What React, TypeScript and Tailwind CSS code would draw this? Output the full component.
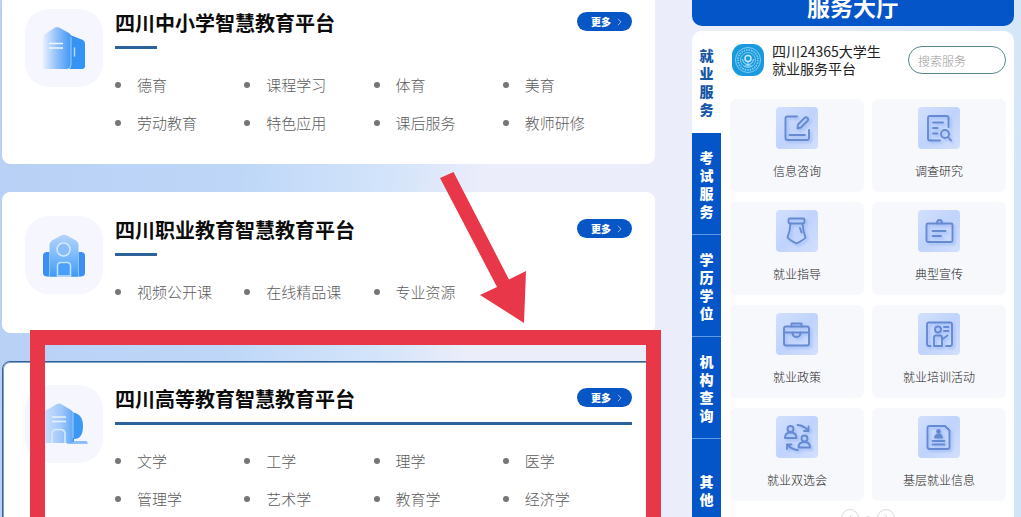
import type { ReactNode } from "react";

type Platform = {
  title: string;
  items: string[];
  icon: ReactNode;
  card: string;
  rule: string;
  overlay?: ReactNode;
};

function SchoolIcon() {
  return (
    <svg viewBox="0 0 78 78" className="size-full" aria-hidden="true">
      <defs>
        <linearGradient id="school-a" x1="0" x2="1" y1="0" y2="0">
          <stop offset="0" stopColor="#e9f0fe" />
          <stop offset="0.500" stopColor="#8fbefa" />
          <stop offset="1" stopColor="#4199f8" />
        </linearGradient>
      </defs>
      <path d="M45 26 L58 31 Q60 32 60 35 V57 Q60 60 57 60 H44 Z" fill="#3593f5" />
      <path d="M18 29 Q18 26 20 25 L30 18.500 Q32 17.500 34 18.500 L44 24 Q46 25 46 28 V60 H18 Z" fill="url(#school-a)" />
      <path d="M46 28 V56 Q46 60 42 60" fill="none" stroke="#9fd0ff" strokeWidth="1" />
      <path d="M24 34.500 H38 M24 39 H38" stroke="#eef6ff" strokeWidth="1.500" />
      <path d="M49.500 39 V47" stroke="#b5dcff" strokeWidth="1.500" strokeLinecap="round" />
    </svg>
  );
}

function HallIcon() {
  return (
    <svg viewBox="0 0 78 78" className="size-full" aria-hidden="true">
      <defs>
        <linearGradient id="hall-a" x1="0" x2="0" y1="0" y2="1">
          <stop offset="0" stopColor="#b4d3fb" />
          <stop offset="0.500" stopColor="#7cbaf9" />
          <stop offset="1" stopColor="#3f9af7" />
        </linearGradient>
      </defs>
      <rect x="18" y="36" width="42" height="24.500" rx="4" fill="#3c8ff0" />
      <path d="M24.500 60.500 V29 Q24.500 26 27 24.500 L36 19.500 Q39 18 42 19.500 L51 24.500 Q53.500 26 53.500 29 V60.500 Z" fill="url(#hall-a)" />
      <path d="M24.500 36 V60 M53.500 36 V60" stroke="#8ac4fc" strokeWidth="1" />
      <circle cx="38.500" cy="33.500" r="6.500" fill="#8abcf7" stroke="#d3e8ff" strokeWidth="1.500" />
      <path d="M32.500 60 V50 Q32.500 46.500 36 46.500 H42 Q45.500 46.500 45.500 50 V60 Z" fill="#4c9ff7" stroke="#c4e2ff" strokeWidth="1.500" />
    </svg>
  );
}

function CollegeIcon() {
  return (
    <svg viewBox="0 0 78 78" className="size-full" aria-hidden="true">
      <defs>
        <linearGradient id="college-a" x1="0" x2="1" y1="0" y2="0">
          <stop offset="0" stopColor="#cfe0fc" />
          <stop offset="0.600" stopColor="#a0c8fb" />
          <stop offset="1" stopColor="#60a8f8" />
        </linearGradient>
      </defs>
      <path d="M44 27 Q58 27 58 41 Q58 54 49 54 V56 H61 Q62.500 57 62.500 58.500 H42 Z" fill="#3d97f5" />
      <path d="M50 56 H61 Q62.500 57 62.500 58.500 H42 Z" fill="#8cbdf9" />
      <path d="M18 29 Q18 27 20 26 L32 19 Q34 18 36 19 L46 25 Q48 26 48 29 V58 H18 Z" fill="url(#college-a)" />
      <path d="M48 27.500 V53" stroke="#9dcdff" strokeWidth="1" />
      <path d="M27 32 H41 M27 36.500 H41" stroke="#e6f1ff" strokeWidth="1.500" />
      <path d="M27 58 V49 Q27 44.500 32 44.500 H35 Q40 44.500 40 49 V58" fill="none" stroke="#d9eaff" strokeWidth="1.500" />
    </svg>
  );
}

function PointerArrow() {
  return (
    <svg
      viewBox="0 0 86 151"
      className="pointer-events-none absolute -top-[21px] right-[128px] z-20 h-[151px] w-[86px]"
      aria-hidden="true"
    >
      <path d="M0 6 L13.500 0 L69 107.500 L86 99 L84 151 L40 123 L57 115 Z" fill="#e83748" />
    </svg>
  );
}

const platforms: Platform[] = [
  {
    title: "四川中小学智慧教育平台",
    items: ["德育", "课程学习", "体育", "美育", "劳动教育", "特色应用", "课后服务", "教师研修"],
    icon: <SchoolIcon />,
    card: "rounded-b-lg border-white pt-2",
    rule: "w-[42px]",
  },
  {
    title: "四川职业教育智慧教育平台",
    items: ["视频公开课", "在线精品课", "专业资源"],
    icon: <HallIcon />,
    card: "rounded-lg border-white pt-[23px]",
    rule: "w-[42px]",
    overlay: <PointerArrow />,
  },
  {
    title: "四川高等教育智慧教育平台",
    items: ["文学", "工学", "理学", "医学", "管理学", "艺术学", "教育学", "经济学"],
    icon: <CollegeIcon />,
    card: "rounded-lg border-[#2f6299] pt-[23px] ring-1 ring-inset ring-[#2f6299]/60",
    rule: "w-full",
    overlay: (
      <div className="pointer-events-none absolute -top-8 -right-[7px] -bottom-16 left-[27px] z-10 border-[15px] border-[#e83748]" />
    ),
  },
];

function PlatformCard({ title, items, icon, card, rule, overlay }: Platform) {
  return (
    <article className={`relative flex shrink-0 gap-3 border bg-white px-[22px] pb-5 ${card}`}>
      <div className="size-[78px] shrink-0 rounded-[24px] bg-[#f5f6fe]">{icon}</div>
      <div className="min-w-0 flex-1">
        <header className="flex h-7 items-start justify-between">
          <h2 className="text-xl leading-7 font-bold text-[#0c0c0c]">{title}</h2>
          <button
            type="button"
            className="mt-[3px] flex h-[19px] w-[55px] items-center justify-center gap-1.5 rounded-full bg-[#0855c5] pl-1 text-[10px] leading-none font-black text-white"
          >
            更多
            <svg viewBox="0 0 6 10" className="h-2 w-[5px]" fill="none" stroke="#b9d3fa" aria-hidden="true">
              <path d="M1 1 L5 5 L1 9" />
            </svg>
          </button>
        </header>
        <div className={`mt-[9px] h-[3px] bg-[#2c6299] ${rule}`} />
        <ul className="mt-[17px] grid grid-cols-4 pb-px">
          {items.map((item) => (
            <li key={item} className="flex h-[38px] items-center gap-4 text-[15px] font-light whitespace-nowrap text-[#5c5c5c]">
              <span className="size-[6px] shrink-0 rounded-full bg-[#757575]" />
              {item}
            </li>
          ))}
        </ul>
      </div>
      {overlay}
    </article>
  );
}

const services: { label: string; art: ReactNode }[] = [
  {
    label: "信息咨询",
    art: (
      <>
        <path d="M21 9.500 H11.500 Q9.500 9.500 9.500 11.500 V31 Q9.500 33 11.500 33 H31 Q33 33 33 31 V23" />
        <path d="M22 17.500 L28.500 11 Q30 9.500 31.500 11 Q33 12.500 31.500 14 L25 20.500 L21.500 21.500 Z" />
        <path d="M13.500 28 H29" />
      </>
    ),
  },
  {
    label: "调查研究",
    art: (
      <>
        <path d="M30.500 20 V11 Q30.500 9 28.500 9 H12 Q10 9 10 11 V31.500 Q10 33.500 12 33.500 H22" />
        <path d="M15 15.500 H25 M15 21 H19.500 M15 26.500 H19.500" />
        <circle cx="27" cy="27" r="4" />
        <path d="M30 30 L33 33.500" />
      </>
    ),
  },
  {
    label: "就业指导",
    art: (
      <>
        <rect x="12.500" y="8.500" width="16" height="5" rx="1.500" />
        <path d="M14.500 13.500 Q14 21 11.500 27.500 Q12 29 20.500 33.500 Q29 29 29.500 27.500 Q27 21 26.500 13.500" />
        <path d="M24 18 L25.500 22.500" />
      </>
    ),
  },
  {
    label: "典型宣传",
    art: (
      <>
        <rect x="8.500" y="13.500" width="26" height="18.500" rx="1.500" />
        <path d="M19 13.500 Q19 10 21.500 10 Q24 10 24 13.500" />
        <path d="M14.500 21 H27.500 M14.500 26 H23" />
      </>
    ),
  },
  {
    label: "就业政策",
    art: (
      <>
        <rect x="8" y="13.500" width="25" height="19" rx="2" />
        <path d="M15.500 13.500 V10.500 H25.500 V13.500 M8 19.500 H33" />
        <path d="M16.500 19.500 Q16.500 24 20.500 24 Q24.500 24 24.500 19.500" />
      </>
    ),
  },
  {
    label: "就业培训活动",
    art: (
      <>
        <path d="M12.500 33 H11 Q9 33 9 31 V11.500 Q9 9.500 11 9.500 H32 Q34 9.500 34 11.500 V31 Q34 33 32 33 H28" />
        <circle cx="20" cy="16.500" r="3" />
        <path d="M16 33 V24.500 Q16 22.500 18 22.500 H22 Q24 22.500 24 24.500 V33 Z M24 26.500 L29.500 22.500" />
        <path d="M26 14 H30.500 M26 18 H30.500" />
      </>
    ),
  },
  {
    label: "就业双选会",
    art: (
      <>
        <circle cx="14.500" cy="13" r="3" />
        <path d="M9 22 Q9 16.500 14.500 16.500 Q20.500 16.500 20.500 22 Z" />
        <circle cx="28.500" cy="22.500" r="3" />
        <path d="M22.500 31.500 Q22.500 26 28.500 26 Q34 26 34 31.500 Z" />
        <path d="M21.500 9 Q28 9.500 32.500 15 M32.500 10.500 V15 H28" />
        <path d="M22 34 Q15.500 33.500 11 28.500 M11 33 V28.500 H15.500" />
      </>
    ),
  },
  {
    label: "基层就业信息",
    art: (
      <>
        <path d="M27 10 H11.500 Q9.500 10 9.500 12 V31 Q9.500 33 11.500 33 H29.500 Q31.500 33 31.500 31 V14.500 Z" />
        <circle cx="20.500" cy="15.500" r="1.500" fill="#5b80d0" />
        <path d="M17 21.500 Q17.500 18.500 20.500 18.500 Q23.500 18.500 24 21.500 Z" fill="#5b80d0" />
        <path d="M14.500 25 H26.500 M14.500 28.500 H26.500" />
      </>
    ),
  },
];

const tabs = ["就业服务", "考试服务", "学历学位", "机构查询", "其他"];

function ServiceLogo() {
  return (
    <svg viewBox="0 0 32 32" className="size-8 shrink-0" fill="none" aria-hidden="true">
      <rect width="32" height="32" rx="11" fill="#189ade" />
      <circle cx="16" cy="16" r="12.500" stroke="#86cdf2" />
      <circle cx="16" cy="16" r="10" stroke="#8fd2f4" strokeDasharray="1.500 1" strokeWidth="1.500" />
      <circle cx="16" cy="16" r="7.500" stroke="#7ac8f1" />
      <circle cx="16" cy="14.500" r="3" stroke="#c9eafa" strokeWidth="1.500" />
      <path d="M10.500 15 Q11.500 20.500 16 20.500 Q20.500 20.500 21.500 15 M16 18 V22 M12.500 22 H19.500" stroke="#b3e0f7" />
    </svg>
  );
}

export default function App() {
  return (
    <div className="flex h-screen items-stretch gap-[37px] overflow-hidden bg-[linear-gradient(95deg,#b8d0f5_0%,#bed7f8_24%,#d3e4fa_38%,#ebedfa_47%,#ebedfa_75%,#d0e5f8_100%)] pr-[7px] pl-[2px] font-['Noto_Sans_CJK_SC',sans-serif]">
      <main className="flex min-w-0 flex-1 flex-col gap-7">
        {platforms.map((p) => (
          <PlatformCard key={p.title} {...p} />
        ))}
      </main>

      <aside className="flex w-[322px] shrink-0 flex-col gap-[5px]">
        <h1 className="flex h-[26px] shrink-0 items-end justify-center rounded-b-[10px] bg-[#0455c8] pb-1.5 text-[23px] leading-7 font-bold text-white">
          服务大厅
        </h1>
        <section className="flex flex-1 overflow-hidden rounded-t-[10px] bg-white">
          <nav className="flex w-[29px] shrink-0 flex-col">
            {tabs.map((tab, i) => (
              <button
                key={tab}
                type="button"
                className={`flex h-[102px] shrink-0 items-center justify-center border-b text-[14px] leading-[18px] font-black ${
                  i === 0 ? "border-white bg-white text-[#1757a8]" : "border-[#5d9be4] bg-[#0455c8] text-white"
                }`}
              >
                <span className="w-[14px] break-all">{tab}</span>
              </button>
            ))}
          </nav>

          <div className="min-w-0 flex-1 pt-[13px] pr-2 pl-[9px]">
            <header className="flex h-8 items-center gap-2 pl-[2px]">
              <ServiceLogo />
              <h2 className="text-[14px] leading-[17px] whitespace-nowrap text-[#222]">
                <span className="block">四川24365大学生</span>
                <span className="block">就业服务平台</span>
              </h2>
              <input
                type="search"
                aria-label="搜索服务"
                placeholder="搜索服务"
                className="ml-auto h-7 w-[98px] rounded-full border border-[#57878c] bg-white px-[9px] text-xs font-light text-[#444] placeholder:text-[#999]"
              />
            </header>

            <ul className="mt-[23px] grid grid-cols-2 gap-x-2 gap-y-[10px]">
              {services.map(({ label, art }) => (
                <li key={label}>
                  <a
                    href="#"
                    className="flex h-[93px] flex-col items-center gap-[14px] rounded-md bg-[#f7f8fb] pt-2 text-xs leading-4 font-light text-[#222]"
                  >
                    <svg
                      viewBox="0 0 42 42"
                      className="size-[42px] shrink-0 rounded bg-linear-to-br from-[#d3e0fd] via-[#c0d3fc] to-[#d3e0fd]"
                      fill="none"
                      stroke="#668ad2"
                      strokeWidth="1.900"
                      strokeLinecap="round"
                      strokeLinejoin="round"
                      aria-hidden="true"
                    >
                      <g className="drop-shadow-[2px_2px_1px_#a3bff8]">{art}</g>
                    </svg>
                    {label}
                  </a>
                </li>
              ))}
            </ul>

            <div className="mt-2 flex items-center justify-center gap-[7px]">
              <button type="button" aria-label="上一页" className="flex size-[18px] items-center justify-center rounded-full border border-[#d8dade]">
                <svg viewBox="0 0 6 10" className="h-2 w-[5px]" fill="none" stroke="#c4c8ce" aria-hidden="true">
                  <path d="M5 1 L1 5 L5 9" />
                </svg>
              </button>
              <span className="size-1 rounded-full bg-[#d8dade]" />
              <button type="button" aria-label="下一页" className="flex size-[18px] items-center justify-center rounded-full border border-[#d8dade]">
                <svg viewBox="0 0 6 10" className="h-2 w-[5px]" fill="none" stroke="#c4c8ce" aria-hidden="true">
                  <path d="M1 1 L5 5 L1 9" />
                </svg>
              </button>
            </div>
          </div>
        </section>
      </aside>
    </div>
  );
}
